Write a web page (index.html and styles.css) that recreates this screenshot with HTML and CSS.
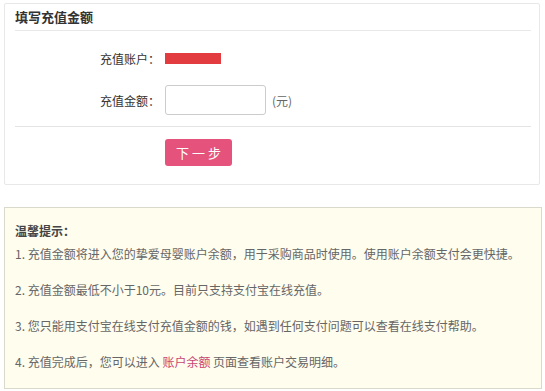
FILE: index.html
```html
<!DOCTYPE html>
<html lang="zh-CN">
<head>
    <meta charset="UTF-8">
    <title>填写充值金额</title>
    <link rel="stylesheet" href="styles.css">
</head>
<body>
    <div class="recharge-box">
        <div class="box-title">填写充值金额</div>
        <div class="form-area">
            <div class="form-row">
                <span class="form-label">充值账户<span class="colon">：</span></span>
                <span class="account-name"></span>
            </div>
            <div class="form-row">
                <span class="form-label">充值金额<span class="colon">：</span></span>
                <input type="text" class="amount-input">
                <span class="unit">(元)</span>
            </div>
        </div>
        <div class="btn-area">
            <button class="next-btn">下 一 步</button>
        </div>
    </div>

    <div class="tips">
        <p class="tips-title">温馨提示：</p>
        <p>1. 充值金额将进入您的挚爱母婴账户余额，用于采购商品时使用。使用账户余额支付会更快捷。</p>
        <p>2. 充值金额最低不小于10元。目前只支持支付宝在线充值。</p>
        <p>3. 您只能用支付宝在线支付充值金额的钱，如遇到任何支付问题可以查看在线支付帮助。</p>
        <p>4. 充值完成后，您可以进入 <a href="#">账户余额</a> 页面查看账户交易明细。</p>
    </div>
</body>
</html>
```

FILE: styles.css
```css
body {
    margin: 0;
    padding: 0;
    background-color: #fff;
    font-family: "Noto Sans CJK SC", "Liberation Sans", sans-serif;
    font-size: 12px;
    color: #333;
}
.recharge-box {
    margin: 3px 5px 0 4px;
    padding: 0 8px 0 10px;
    border: 1px solid #e8e8e8;
    border-radius: 2px;
}
.box-title {
    height: 26px;
    line-height: 26px;
    font-size: 13px;
    font-weight: bold;
    color: #333;
    border-bottom: 1px solid #e8e8e8;
}
.form-area {
    padding: 12px 0 11px 0;
    border-bottom: 1px solid #e3e3e3;
    display: flex;
    flex-direction: column;
    gap: 12px;
}
.form-row {
    display: flex;
    align-items: center;
    height: 30px;
}
.form-label {
    width: 145px;
    text-align: right;
    margin-right: 5px;
    color: #333;
}
.form-label .colon {
    font-family: "Noto Sans CJK TC", sans-serif;
}
.account-name {
    width: 56px;
    height: 11px;
    background-color: #e23c40;
}
.amount-input {
    box-sizing: border-box;
    width: 101px;
    height: 30px;
    margin: 0;
    border: 1px solid #ccc;
    border-radius: 3px;
    padding: 0 6px;
}
.unit {
    margin-left: 6px;
    color: #666;
}
.btn-area {
    padding: 12px 0 18px 150px;
}
.next-btn {
    display: block;
    width: 67px;
    height: 27px;
    border: none;
    border-radius: 3px;
    background-color: #e5527c;
    color: #fff;
    font-family: "Noto Sans CJK SC", sans-serif;
    font-size: 13px;
    padding: 0;
    cursor: pointer;
}
.tips {
    margin: 22px 3px 0 4px;
    padding: 13px 10px 16px 10px;
    background-color: #fefdee;
    border: 1px solid #d9d9cc;
    color: #666;
}
.tips p {
    margin: 16px 0 0 0;
    line-height: 20px;
}
.tips p.tips-title {
    margin: 0;
    font-weight: bold;
    color: #444;
}
.tips p.tips-title + p {
    margin-top: 3px;
}
.tips a {
    color: #c94472;
    text-decoration: none;
}
```
